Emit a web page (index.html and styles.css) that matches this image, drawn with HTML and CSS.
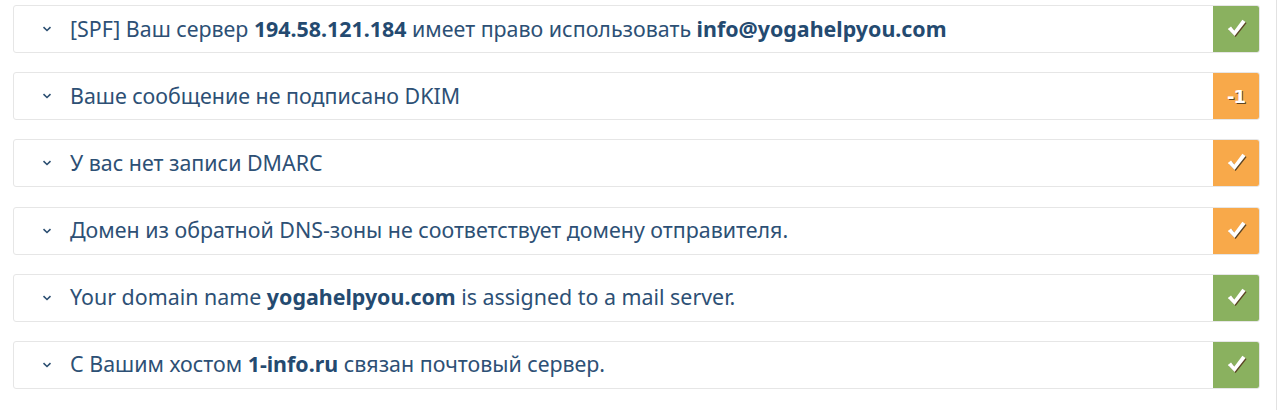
FILE: index.html
```html
<!DOCTYPE html>
<html lang="ru">
<head>
  <meta charset="UTF-8" />
  <title>Проверка почты</title>
  <link rel="stylesheet" href="styles.css">
</head>
<body>
  <div class="checks">

    <div class="check">
      <span class="arrow"><svg width="10" height="6" viewBox="0 0 10 6"><path d="M1.5 1.2 L5 4.5 L8.5 1.2" fill="none" stroke="#2c4f72" stroke-width="1.6"/></svg></span>
      <div class="text">[SPF] Ваш сервер <b>194.58.121.184</b> имеет право использовать <b>info@yogahelpyou.com</b></div>
      <div class="badge ok"><svg class="tick" width="19" height="18" viewBox="0 0 19 18"><path d="M0.8 10 L4 7.4 L7.4 11.4 L15.4 0.8 L18.6 3 L7.6 17 Z" fill="#fff"/></svg></div>
    </div>

    <div class="check">
      <span class="arrow"><svg width="10" height="6" viewBox="0 0 10 6"><path d="M1.5 1.2 L5 4.5 L8.5 1.2" fill="none" stroke="#2c4f72" stroke-width="1.6"/></svg></span>
      <div class="text">Ваше сообщение не подписано DKIM</div>
      <div class="badge warn minus">-1</div>
    </div>

    <div class="check">
      <span class="arrow"><svg width="10" height="6" viewBox="0 0 10 6"><path d="M1.5 1.2 L5 4.5 L8.5 1.2" fill="none" stroke="#2c4f72" stroke-width="1.6"/></svg></span>
      <div class="text">У вас нет записи DMARC</div>
      <div class="badge warn"><svg class="tick" width="19" height="18" viewBox="0 0 19 18"><path d="M0.8 10 L4 7.4 L7.4 11.4 L15.4 0.8 L18.6 3 L7.6 17 Z" fill="#fff"/></svg></div>
    </div>

    <div class="check">
      <span class="arrow"><svg width="10" height="6" viewBox="0 0 10 6"><path d="M1.5 1.2 L5 4.5 L8.5 1.2" fill="none" stroke="#2c4f72" stroke-width="1.6"/></svg></span>
      <div class="text">Домен из обратной DNS-зоны не соответствует домену отправителя.</div>
      <div class="badge warn"><svg class="tick" width="19" height="18" viewBox="0 0 19 18"><path d="M0.8 10 L4 7.4 L7.4 11.4 L15.4 0.8 L18.6 3 L7.6 17 Z" fill="#fff"/></svg></div>
    </div>

    <div class="check">
      <span class="arrow"><svg width="10" height="6" viewBox="0 0 10 6"><path d="M1.5 1.2 L5 4.5 L8.5 1.2" fill="none" stroke="#2c4f72" stroke-width="1.6"/></svg></span>
      <div class="text">Your domain name <b>yogahelpyou.com</b> is assigned to a mail server.</div>
      <div class="badge ok"><svg class="tick" width="19" height="18" viewBox="0 0 19 18"><path d="M0.8 10 L4 7.4 L7.4 11.4 L15.4 0.8 L18.6 3 L7.6 17 Z" fill="#fff"/></svg></div>
    </div>

    <div class="check">
      <span class="arrow"><svg width="10" height="6" viewBox="0 0 10 6"><path d="M1.5 1.2 L5 4.5 L8.5 1.2" fill="none" stroke="#2c4f72" stroke-width="1.6"/></svg></span>
      <div class="text">С Вашим хостом <b>1-info.ru</b> связан почтовый сервер.</div>
      <div class="badge ok"><svg class="tick" width="19" height="18" viewBox="0 0 19 18"><path d="M0.8 10 L4 7.4 L7.4 11.4 L15.4 0.8 L18.6 3 L7.6 17 Z" fill="#fff"/></svg></div>
    </div>

  </div>
</body>
</html>
```

FILE: styles.css
```css
body {
  margin: 0;
  background: #fff;
  font-family: 'Noto Sans', 'Open Sans', sans-serif;
}

.checks {
  width: 1277px;
  height: 410px;
  border-right: 1px solid #e2e2e2;
  padding: 5px 0 0 13px;
  box-sizing: border-box;
  display: flex;
  flex-direction: column;
  gap: 19.2px;
}

.check {
  width: 1247px;
  height: 48px;
  box-sizing: border-box;
  border: 1px solid #e6e6e6;
  border-radius: 3px;
  display: flex;
  align-items: center;
  background: #fff;
}

.arrow {
  width: 56px;
  padding-left: 28px;
  box-sizing: border-box;
  display: flex;
  align-items: center;
}

.text {
  flex: 1;
  font-size: 21.4px;
  color: #2d5075;
  white-space: nowrap;
  margin-top: -2px;
}

.text b {
  color: #244a70;
  font-weight: 700;
}

.badge {
  width: 46px;
  height: 46px;
  display: flex;
  align-items: center;
  justify-content: center;
  color: #fff;
  border-radius: 0 2px 2px 0;
}

.tick {
  filter: drop-shadow(1px 1px 0 #5b4424);
  margin-top: -2px;
}

.badge.ok {
  background: #8ab15f;
}

.badge.warn {
  background: #f8a94a;
}

.badge.minus {
  font-size: 18px;
  font-weight: bold;
  font-family: 'DejaVu Sans', sans-serif;
  letter-spacing: -1px;
  text-shadow: 1px 1px 0 #5b4424;
}
```
